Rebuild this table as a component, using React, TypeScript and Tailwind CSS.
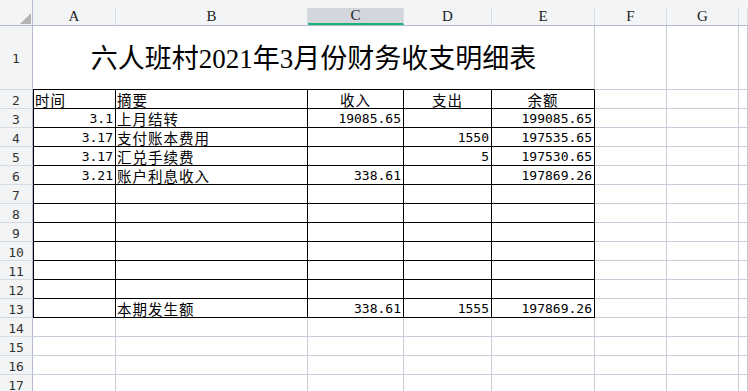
import React from "react";

const GRID = "border-[#c8cddc]";
const MONO = { fontFamily: '"DejaVu Sans Mono", "Liberation Mono", monospace' };
const CJK = { fontFamily: '"Noto Sans CJK SC", "Noto Sans", sans-serif' };

type Align = "l" | "r" | "c";
type CellDef = { t: string; a: Align; num?: boolean };

const colLetters = ["A", "B", "C", "D", "E", "F", "G", ""];

const table: (CellDef | null)[][] = [
  [
    { t: "时间", a: "l" },
    { t: "摘要", a: "l" },
    { t: "收入", a: "c" },
    { t: "支出", a: "c" },
    { t: "余额", a: "c" },
  ],
  [
    { t: "3.1", a: "r", num: true },
    { t: "上月结转", a: "l" },
    { t: "19085.65", a: "r", num: true },
    null,
    { t: "199085.65", a: "r", num: true },
  ],
  [
    { t: "3.17", a: "r", num: true },
    { t: "支付账本费用", a: "l" },
    null,
    { t: "1550", a: "r", num: true },
    { t: "197535.65", a: "r", num: true },
  ],
  [
    { t: "3.17", a: "r", num: true },
    { t: "汇兑手续费", a: "l" },
    null,
    { t: "5", a: "r", num: true },
    { t: "197530.65", a: "r", num: true },
  ],
  [
    { t: "3.21", a: "r", num: true },
    { t: "账户利息收入", a: "l" },
    { t: "338.61", a: "r", num: true },
    null,
    { t: "197869.26", a: "r", num: true },
  ],
  [null, null, null, null, null],
  [null, null, null, null, null],
  [null, null, null, null, null],
  [null, null, null, null, null],
  [null, null, null, null, null],
  [null, null, null, null, null],
  [
    null,
    { t: "本期发生额", a: "l" },
    { t: "338.61", a: "r", num: true },
    { t: "1555", a: "r", num: true },
    { t: "197869.26", a: "r", num: true },
  ],
];

function RowHead({ n }: { n: number }) {
  return (
    <div
      className="flex items-center justify-center border-r border-b border-r-[#b3bbcf] border-b-[#d6dae4] bg-[#f3f4f6] pt-[3px] text-[13px] leading-[14px] text-[#333]"
      style={MONO}
    >
      {n}
    </div>
  );
}

function DataCell({ c, first }: { c: CellDef | null; first: boolean }) {
  const align =
    c?.a === "r" ? "justify-end pr-[2px]" : c?.a === "c" ? "justify-center" : "justify-start pl-[1px]";
  return (
    <div
      className={`flex items-end whitespace-nowrap border-r border-b border-black text-black ${
        first ? "border-l" : ""
      } ${align}`}
    >
      {c ? (
        c.num ? (
          <span className="pb-[1px] text-[13px] leading-[15px]" style={MONO}>
            {c.t}
          </span>
        ) : (
          <span className="text-[14.5px] leading-[16px] tracking-[1px]" style={CJK}>
            {c.t}
          </span>
        )
      ) : null}
    </div>
  );
}

function GridCell() {
  return <div className={`border-r border-b ${GRID}`} />;
}

export default function App() {
  const rows: React.ReactNode[] = [];

  rows.push(
    <div key="corner" className="relative border-r border-b border-r-[#b3bbcf] border-b-[#b3bbcf] bg-[#f3f4f6]">
      <svg className="absolute left-[20px] top-[13px]" width="11" height="11" viewBox="0 0 11 11">
        <polygon points="0,11 11,11 11,0" fill="#b4b4b4" />
      </svg>
    </div>
  );
  colLetters.forEach((l, i) => {
    const selected = l === "C";
    rows.push(
      <div key={"h" + i} className="flex flex-col border-b border-[#b3bbcf] bg-[#f3f4f6]">
        <div className="h-[8px]" />
        <div
          className={`flex flex-1 items-center justify-center border-r border-[#d9dce4] text-[15px] leading-none text-[#222] ${
            selected ? "border-b-2 border-b-[#1fb077] bg-[#d3d6dd]" : ""
          }`}
          style={{ fontFamily: '"Liberation Serif", "DejaVu Serif", serif' }}
        >
          {l}
        </div>
      </div>
    );
  });

  rows.push(<RowHead key="r1" n={1} />);
  rows.push(
    <div
      key="title"
      className="col-span-5 flex items-center justify-center border-r border-b border-b-black border-r-[#c8cddc] pt-[4px] text-[27px] leading-none text-black"
      style={{ fontFamily: '"Liberation Serif", "Noto Sans CJK SC", serif' }}
    >
      六人班村2021年3月份财务收支明细表
    </div>
  );
  rows.push(<GridCell key="t1f" />, <GridCell key="t1g" />, <GridCell key="t1h" />);

  table.forEach((r, ri) => {
    const n = ri + 2;
    rows.push(<RowHead key={"rh" + n} n={n} />);
    r.forEach((c, ci) => rows.push(<DataCell key={`c${n}-${ci}`} c={c} first={ci === 0} />));
    rows.push(<GridCell key={`f${n}`} />, <GridCell key={`g${n}`} />, <GridCell key={`hh${n}`} />);
  });

  for (let n = 14; n <= 17; n++) {
    rows.push(<RowHead key={"rh" + n} n={n} />);
    for (let k = 0; k < 8; k++) rows.push(<GridCell key={`e${n}-${k}`} />);
  }

  return (
    <div className="h-[391px] w-[748px] overflow-hidden bg-white">
      <div className="grid grid-cols-[33px_83px_192px_96px_88px_103px_72px_72px_1fr] grid-rows-[26px_64px_repeat(16,19px)]">
        {rows}
      </div>
    </div>
  );
}
